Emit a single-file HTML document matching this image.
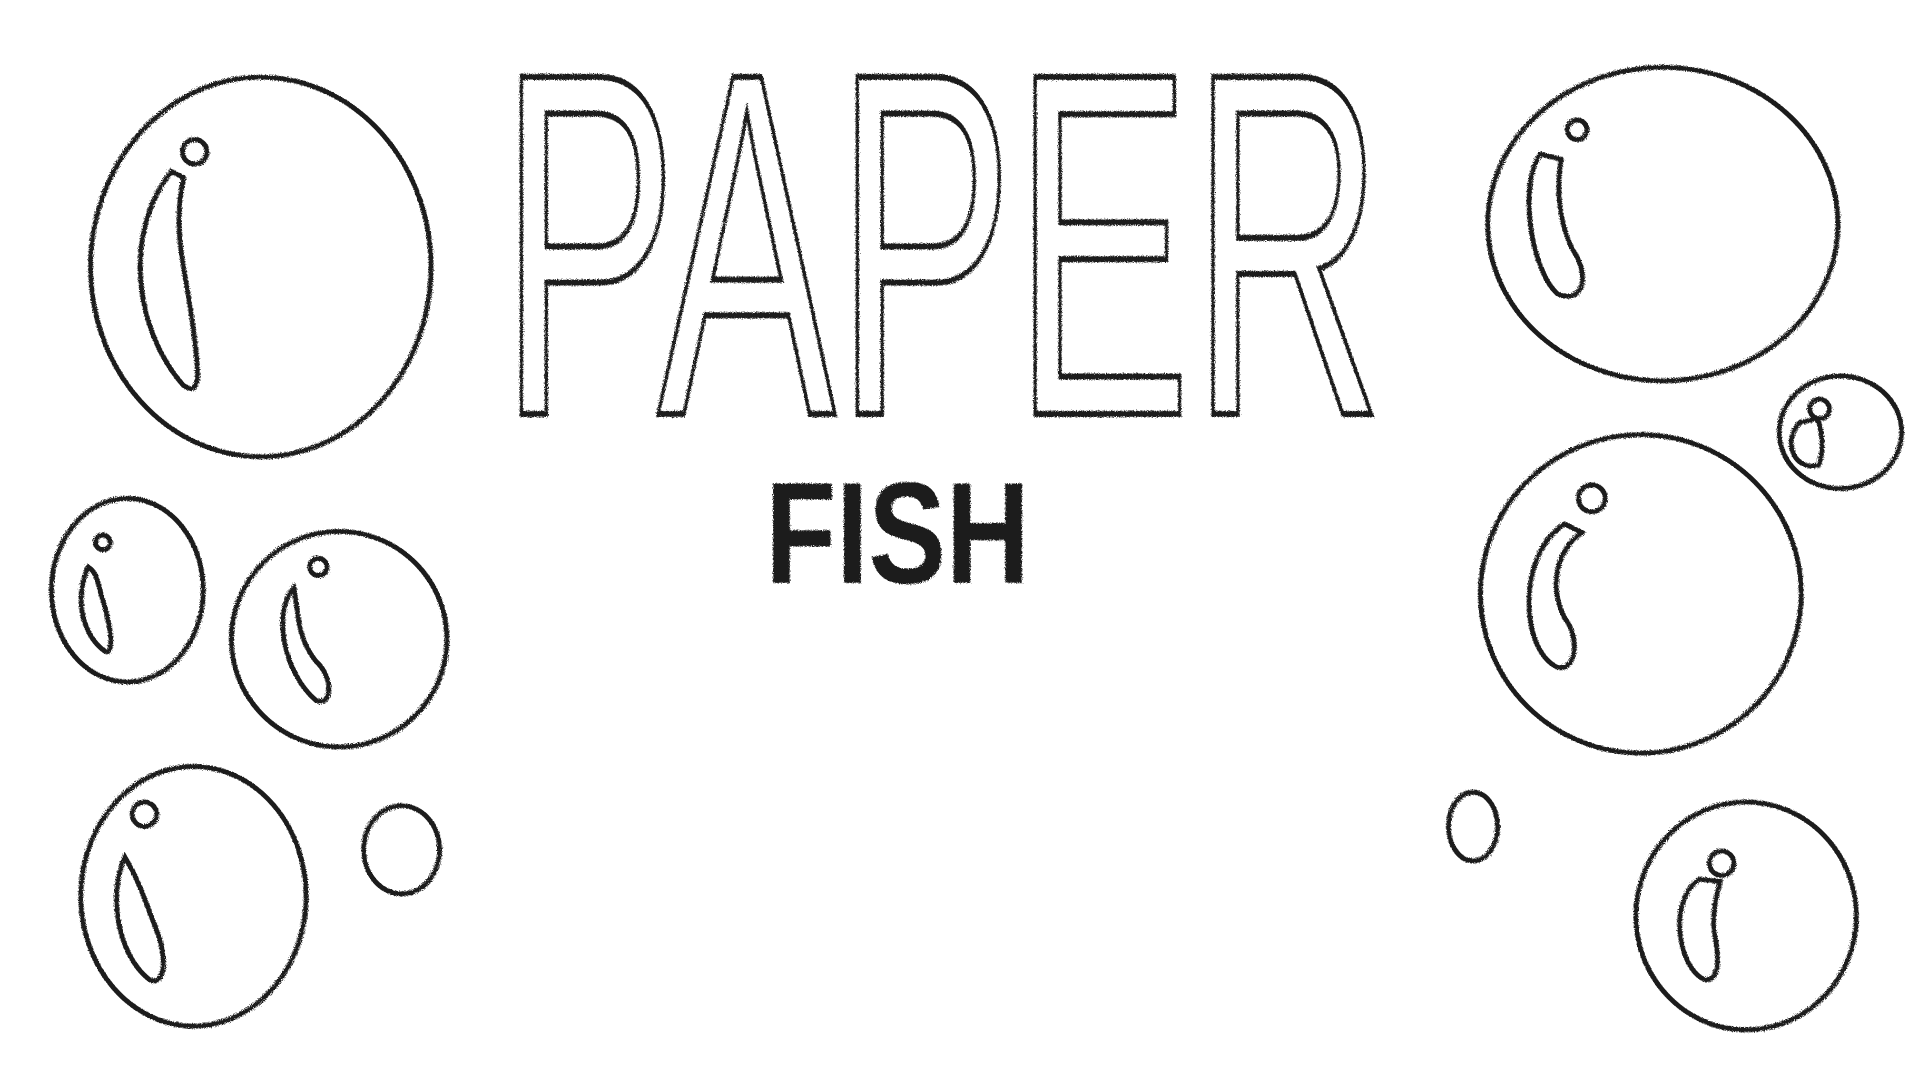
<!DOCTYPE html>
<html><head><meta charset="utf-8"><style>
html,body{margin:0;padding:0;background:#fff;width:1920px;height:1080px;overflow:hidden}
svg{display:block}
</style></head><body>
<svg width="1920" height="1080" viewBox="0 0 1568 882" preserveAspectRatio="none">
<defs>
<filter id="p" x="-10%" y="-10%" width="120%" height="120%">
<feTurbulence type="fractalNoise" baseFrequency="1.1" numOctaves="2" result="n"/>
<feDisplacementMap in="SourceGraphic" in2="n" scale="4"/>
</filter>
</defs>
<rect width="1568" height="882" fill="#fff"/>
<g filter="url(#p)" fill="none" stroke="#1c1c1c" stroke-width="4" stroke-linecap="round">
<ellipse cx="213" cy="218" rx="139" ry="155"/>
<circle cx="159" cy="124" r="10"/>
<path d="M140 140 C100 190 110 270 150 315 C165 325 162 300 158 270 C152 220 140 190 150 145 Z"/>
<ellipse cx="104" cy="482" rx="62" ry="75"/>
<circle cx="84" cy="443" r="6"/>
<path d="M72 463 C60 490 68 520 86 532 C94 534 90 510 84 490 C80 478 80 468 72 463Z"/>
<ellipse cx="277" cy="522" rx="88" ry="88"/>
<circle cx="260" cy="463" r="7"/>
<path d="M240 480 C222 500 232 550 258 572 C272 578 272 552 258 540 C242 520 244 500 240 480Z"/>
<ellipse cx="158" cy="732" rx="92" ry="106"/>
<circle cx="118" cy="665" r="10"/>
<path d="M102 700 C88 730 96 780 122 800 C136 806 136 780 128 760 C120 740 114 720 102 700Z"/>
<ellipse cx="328" cy="694" rx="31" ry="36"/>
<ellipse cx="1358" cy="183" rx="143" ry="128"/>
<circle cx="1288" cy="106" r="8"/>
<path d="M1258 126 C1240 150 1250 220 1272 240 C1290 248 1298 230 1288 210 C1275 190 1270 160 1275 130Z"/>
<ellipse cx="1503" cy="353" rx="50" ry="46"/>
<circle cx="1486" cy="334" r="8"/>
<path d="M1470 345 C1455 360 1465 385 1485 380 C1490 370 1488 350 1484 342Z"/>
<ellipse cx="1340" cy="485" rx="131" ry="130"/>
<circle cx="1300" cy="407" r="11"/>
<path d="M1278 428 C1240 450 1240 530 1272 545 C1288 548 1290 520 1278 505 C1265 480 1270 450 1292 435Z"/>
<ellipse cx="1203" cy="675" rx="20" ry="28"/>
<ellipse cx="1426" cy="748" rx="90" ry="93"/>
<circle cx="1406" cy="705" r="10"/>
<path d="M1388 718 C1362 735 1370 790 1392 800 C1405 802 1404 780 1400 762 C1398 745 1402 730 1405 720Z"/>
</g>
<g filter="url(#p)">
<text x="408" y="338" font-family="'Liberation Sans', sans-serif" font-size="400" textLength="722" lengthAdjust="spacingAndGlyphs" fill="none" stroke="#1a1a1a" stroke-width="5">PAPER</text>
<text x="625" y="476" font-family="'Liberation Sans', sans-serif" font-weight="bold" font-size="118" textLength="216" lengthAdjust="spacingAndGlyphs" fill="#1a1a1a">FISH</text>
</g>
</svg>
</body></html>
